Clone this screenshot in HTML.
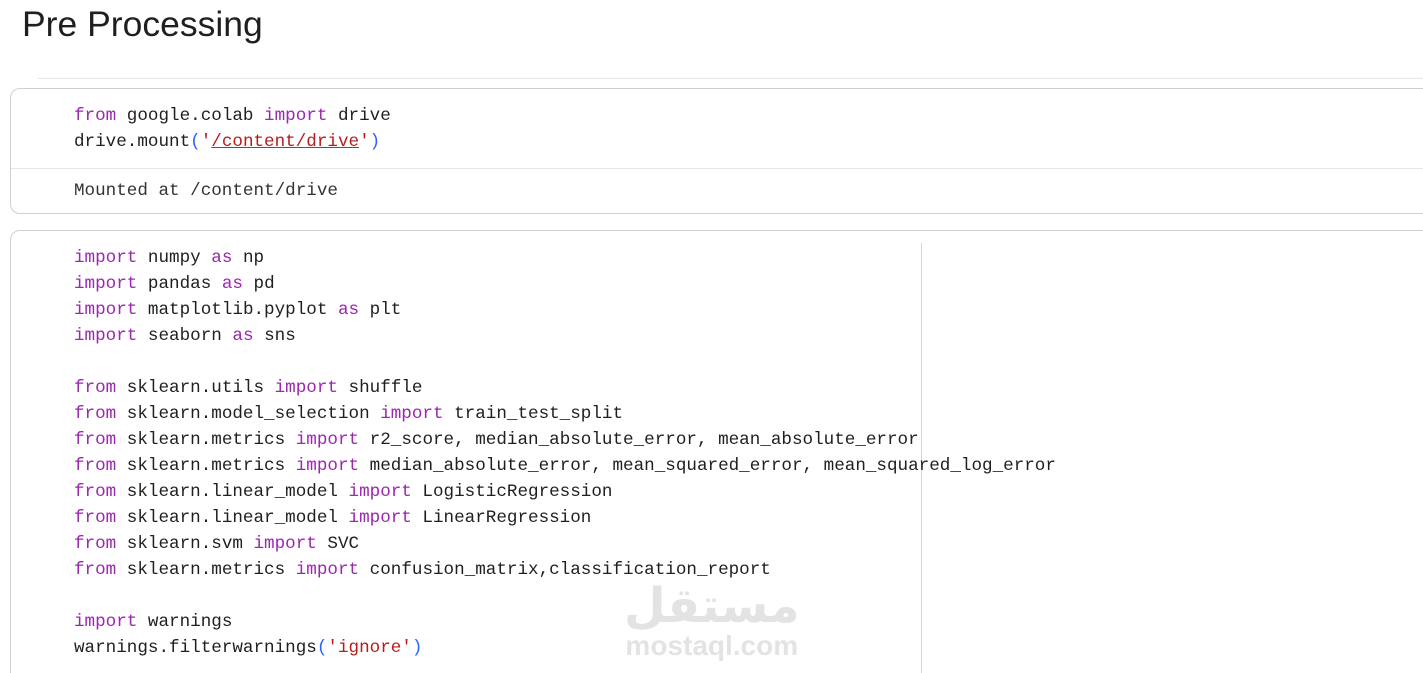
<!DOCTYPE html><html style="overflow:hidden;height:673px"><head><style>
body{margin:0;width:1423px;height:673px;background:#fff;overflow:hidden;position:relative;font-family:"Liberation Sans",sans-serif}
h1{position:absolute;left:22px;top:4px;margin:0;font-weight:400;font-size:35.5px;color:#1f1f1f}
.hr{position:absolute;left:38px;right:0;top:78px;height:1px;background:#e6e6e6}
.card{position:absolute;left:10px;right:0;border:1px solid #cfcfcf;border-right:none;border-radius:10px 0 0 10px}
pre{margin:0;position:absolute;left:63px;font-family:"Liberation Mono",monospace;font-size:17.6px;line-height:26px;color:#1f1f1f}
.k{color:#9c27b0}.s{color:#b71c1c}.p{color:#2962ff}.u{text-decoration:underline;text-decoration-color:#c62828}
.wm{position:absolute;left:624px;top:582px;color:#e3e3e3;font-weight:bold;text-align:center;line-height:1}
</style></head><body>
<h1>Pre Processing</h1>
<div class="hr"></div>
<div class="card" style="top:88px;height:124px">
<pre style="top:14px"><span class="k">from</span> google.colab <span class="k">import</span> drive
drive.mount<span class="p">(</span><span class="s">'<span class="u">/content/drive</span>'</span><span class="p">)</span></pre>
<div style="position:absolute;left:0;right:0;top:79px;height:1px;background:#e6e6e6"></div>
<pre style="top:89px;color:#333">Mounted at /content/drive</pre>
</div>
<div class="card" style="top:230px;height:443px;border-bottom:none;border-radius:10px 0 0 0;overflow:hidden">
<div style="position:absolute;left:910px;top:12px;width:1px;height:431px;background:#d6d6d6"></div>
<pre style="top:14px"><span class="k">import</span> numpy <span class="k">as</span> np
<span class="k">import</span> pandas <span class="k">as</span> pd
<span class="k">import</span> matplotlib.pyplot <span class="k">as</span> plt
<span class="k">import</span> seaborn <span class="k">as</span> sns

<span class="k">from</span> sklearn.utils <span class="k">import</span> shuffle
<span class="k">from</span> sklearn.model_selection <span class="k">import</span> train_test_split
<span class="k">from</span> sklearn.metrics <span class="k">import</span> r2_score, median_absolute_error, mean_absolute_error
<span class="k">from</span> sklearn.metrics <span class="k">import</span> median_absolute_error, mean_squared_error, mean_squared_log_error
<span class="k">from</span> sklearn.linear_model <span class="k">import</span> LogisticRegression
<span class="k">from</span> sklearn.linear_model <span class="k">import</span> LinearRegression
<span class="k">from</span> sklearn.svm <span class="k">import</span> SVC
<span class="k">from</span> sklearn.metrics <span class="k">import</span> confusion_matrix,classification_report

<span class="k">import</span> warnings
warnings.filterwarnings<span class="p">(</span><span class="s">'ignore'</span><span class="p">)</span></pre>
</div>
<div class="wm"><div style="font-size:48px;font-family:'DejaVu Sans',sans-serif">مستقل</div><div style="font-size:28px;margin-top:2px">mostaql.com</div></div>
</body></html>
